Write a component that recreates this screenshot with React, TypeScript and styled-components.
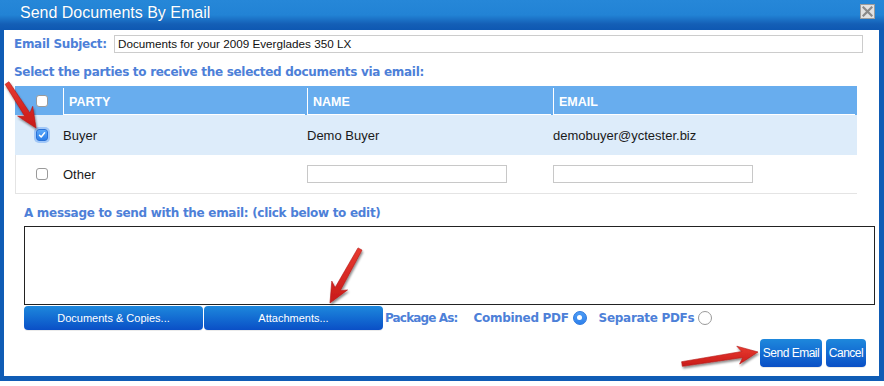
import React from "react";
import styled, { createGlobalStyle, css } from "styled-components";

const GlobalStyle = createGlobalStyle`
  html, body { margin: 0; padding: 0; background: #ffffff; }
  body { font-family: "Liberation Sans", Arial, sans-serif; }
  * { box-sizing: border-box; }
`;

const BLUE_TEXT = "#4d80d8";
const BORDER_BLUE = "#0f5cb5";

const Page = styled.div`
  position: relative;
  width: 884px;
  height: 386px;
  overflow: hidden;
`;

const Dialog = styled.div`
  width: 884px;
  height: 381px;
  display: flex;
  flex-direction: column;
  border-left: 4px solid ${BORDER_BLUE};
  border-right: 5px solid ${BORDER_BLUE};
  border-bottom: 5px solid ${BORDER_BLUE};
  background: #ffffff;
`;

const TitleBar = styled.div`
  height: 30px;
  margin: 0 -5px 0 -4px;
  padding: 4px 9px 0 20px;
  display: flex;
  align-items: flex-start;
  justify-content: space-between;
  background: linear-gradient(to bottom, #2687d8 0%, #2283d5 50%, #145fb6 80%, #0e58b2 100%);
`;

const Title = styled.div`
  color: #ffffff;
  font-size: 16px;
  line-height: 18px;
  font-family: "Liberation Sans", Arial, sans-serif;
  text-shadow: 0 0 1px rgba(0, 40, 100, 0.3);
`;

const CloseButton = styled.div`
  width: 15px;
  height: 15px;
  border: 1px solid #9c9c9c;
  background: #e2e2e2;
  display: flex;
  align-items: center;
  justify-content: center;
`;

const Body = styled.div`
  flex: 1;
  display: flex;
  flex-direction: column;
`;

const FieldRow = styled.div`
  margin-top: 5px;
  padding-left: 10px;
  height: 18px;
  display: flex;
  align-items: center;
`;

const boldBlue = css`
  font-family: "DejaVu Sans", Verdana, sans-serif;
  font-weight: bold;
  color: ${BLUE_TEXT};
  font-size: 12px;
  letter-spacing: -0.3px;
`;

const Label = styled.span`
  ${boldBlue};
  width: 100px;
  line-height: 14px;
`;

const SubjectInput = styled.div`
  width: 749px;
  height: 18px;
  border: 1px solid #cccccc;
  padding: 0 0 0 3px;
  font-family: "Liberation Sans", Arial, sans-serif;
  font-size: 11.7px;
  line-height: 16px;
  color: #111;
`;

const SectionLabel = styled.div<{ $indent: number; $top: number }>`
  ${boldBlue};
  margin-top: ${(p) => p.$top}px;
  padding-left: ${(p) => p.$indent}px;
  height: 14px;
  line-height: 14px;
`;

const Table = styled.div`
  margin-top: 7px;
  margin-left: 11px;
  width: 842px;
  display: flex;
  flex-direction: column;
`;

const columns = "48px 244px 246px 304px";

const HeaderRow = styled.div`
  display: grid;
  grid-template-columns: ${columns};
  height: 29px;
  background: #68adee;
`;

const HeaderCheckCell = styled.div`
  display: flex;
  align-items: center;
  padding-left: 21px;
`;

const HeaderCell = styled.div`
  position: relative;
  margin-top: 2px;
  border-left: 1px solid #ffffff;
  padding-left: 5px;
  display: flex;
  align-items: center;
  color: #ffffff;
  font-weight: bold;
  font-size: 12.5px;
  font-family: "Liberation Sans", Arial, sans-serif;
  &::after {
    content: "";
    position: absolute;
    left: 0;
    right: 2px;
    bottom: 0;
    height: 1px;
    background: #ffffff;
  }
`;

const Row = styled.div<{ $selected?: boolean; $height: number }>`
  display: grid;
  grid-template-columns: ${columns};
  height: ${(p) => p.$height}px;
  align-items: center;
  background: ${(p) => (p.$selected ? "#ddecfa" : "#ffffff")};
  border-left: 1px solid ${(p) => (p.$selected ? "#ddecfa" : "#e4e4e4")};
  border-bottom: ${(p) => (p.$selected ? "none" : "1px solid #e4e4e4")};
`;

const CheckCell = styled.div`
  display: flex;
  align-items: center;
  padding-left: 20px;
`;

const Cell = styled.div`
  font-family: "Liberation Sans", Arial, sans-serif;
  font-size: 13px;
  color: #1a1a1a;
  margin-left: -1px;
`;

const Box = styled.span<{ $checked?: boolean }>`
  width: 12px;
  height: 12px;
  border-radius: 3px;
  display: inline-flex;
  align-items: center;
  justify-content: center;
  ${(p) =>
    p.$checked
      ? css`
          background: linear-gradient(to bottom, #5aa8fa, #2b7fea);
          border: 1px solid #2a72d8;
          box-shadow: 0 0 0 2px rgba(110, 170, 245, 0.55);
        `
      : css`
          background: #ffffff;
          border: 1px solid #9a9a9a;
        `}
`;

const Checkbox = ({ checked }: { checked?: boolean }) => (
  <Box $checked={checked}>
    {checked && (
      <svg width="8" height="8" viewBox="0 0 8 8">
        <path d="M1.5 4.2 L3.2 6 L6.6 1.8" stroke="#fff" strokeWidth="1.5" fill="none" strokeLinecap="round" strokeLinejoin="round" />
      </svg>
    )}
  </Box>
);

const TextInput = styled.div`
  width: 200px;
  height: 18px;
  border: 1px solid #c8c8c8;
  background: #fff;
`;

const MessageBox = styled.div`
  margin-top: 6px;
  margin-left: 20px;
  width: 851px;
  height: 79px;
  border: 1px solid #222222;
  background: #ffffff;
`;

const ActionRow = styled.div`
  margin-top: 1px;
  padding-left: 20px;
  height: 24px;
  display: flex;
  align-items: center;
`;

const BlueButton = styled.div<{ $width: number; $height: number; $size: number; $spacing?: number }>`
  width: ${(p) => p.$width}px;
  height: ${(p) => p.$height}px;
  border-radius: 4px;
  background: linear-gradient(to bottom, #1e88dc 0%, #136cd2 50%, #0a4fc6 100%);
  color: #ffffff;
  font-family: "Liberation Sans", Arial, sans-serif;
  font-size: ${(p) => p.$size}px;
  letter-spacing: ${(p) => p.$spacing ?? 0}px;
  display: flex;
  align-items: center;
  justify-content: center;
  box-shadow: 0 1px 0 rgba(0, 0, 0, 0.08);
`;

const ButtonGroup = styled.div`
  display: flex;
  gap: 1px;
`;

const PackageGroup = styled.div`
  display: flex;
  align-items: center;
  margin-left: 2px;
  padding-bottom: 1px;
`;

const PackageText = styled.span<{ $gapBefore?: number; $gapAfter: number; $spacing?: number }>`
  ${boldBlue};
  letter-spacing: ${(p) => p.$spacing ?? -0.3}px;
  margin-left: ${(p) => p.$gapBefore ?? 0}px;
  margin-right: ${(p) => p.$gapAfter}px;
`;

const Radio = styled.span<{ $checked?: boolean }>`
  width: 14px;
  height: 14px;
  border-radius: 50%;
  display: inline-flex;
  align-items: center;
  justify-content: center;
  ${(p) =>
    p.$checked
      ? css`
          background: linear-gradient(to bottom, #4d9cf5, #2f82ec);
          border: 1px solid #2d78de;
          &::after {
            content: "";
            width: 5px;
            height: 5px;
            border-radius: 50%;
            background: #ffffff;
          }
        `
      : css`
          background: #ffffff;
          border: 1px solid #9a9a9a;
        `}
`;

const FooterRow = styled.div`
  margin-top: 9px;
  padding-right: 13px;
  display: flex;
  justify-content: flex-end;
  gap: 4px;
`;

const ArrowLayer = styled.svg`
  position: absolute;
  left: 0;
  top: 0;
  pointer-events: none;
`;

type Pt = [number, number];

function arrowPoints(tail: Pt, tip: Pt, shaft: number, headW: number, headL: number, sweep: number) {
  const dx = tip[0] - tail[0];
  const dy = tip[1] - tail[1];
  const len = Math.hypot(dx, dy);
  const ux = dx / len;
  const uy = dy / len;
  const nx = -uy;
  const ny = ux;
  const bx = tip[0] - ux * headL;
  const by = tip[1] - uy * headL;
  const wx = bx - ux * sweep;
  const wy = by - uy * sweep;
  const pts: Pt[] = [
    [tail[0] + (nx * shaft) / 2.6, tail[1] + (ny * shaft) / 2.6],
    [bx + (nx * shaft) / 2, by + (ny * shaft) / 2],
    [wx + (nx * headW) / 2, wy + (ny * headW) / 2],
    tip,
    [wx - (nx * headW) / 2, wy - (ny * headW) / 2],
    [bx - (nx * shaft) / 2, by - (ny * shaft) / 2],
    [tail[0] - (nx * shaft) / 2.6, tail[1] - (ny * shaft) / 2.6],
  ];
  return pts.map((p) => `${p[0].toFixed(1)},${p[1].toFixed(1)}`).join(" ");
}

const arrows: { tail: Pt; tip: Pt }[] = [
  { tail: [7, 83], tip: [36, 128] },
  { tail: [360, 249], tip: [330, 303] },
  { tail: [682, 364], tip: [758, 352] },
];

const Arrows = () => (
  <ArrowLayer width="884" height="386" viewBox="0 0 884 386">
    <defs>
      <filter id="shadow" x="-20%" y="-20%" width="140%" height="140%">
        <feDropShadow dx="1" dy="2" stdDeviation="1.2" floodColor="#000" floodOpacity="0.45" />
      </filter>
      <linearGradient id="red" x1="0" y1="0" x2="0" y2="1">
        <stop offset="0" stopColor="#e83a30" />
        <stop offset="1" stopColor="#c81a18" />
      </linearGradient>
    </defs>
    {arrows.map((a, i) => (
      <polygon
        key={i}
        points={arrowPoints(a.tail, a.tip, 6, 18, 16, 4)}
        fill="url(#red)"
        stroke="#b31614"
        strokeWidth="0.6"
        strokeLinejoin="round"
        filter="url(#shadow)"
      />
    ))}
  </ArrowLayer>
);

export default function App() {
  return (
    <>
      <GlobalStyle />
      <Page>
        <Dialog>
          <TitleBar>
            <Title>Send Documents By Email</Title>
            <CloseButton>
              <svg width="11" height="11" viewBox="0 0 11 11">
                <path d="M1.5 1.5 L9.5 9.5 M9.5 1.5 L1.5 9.5" stroke="#8a8a8a" strokeWidth="2.2" strokeLinecap="square" />
              </svg>
            </CloseButton>
          </TitleBar>
          <Body>
            <FieldRow>
              <Label>Email Subject:</Label>
              <SubjectInput>Documents for your 2009 Everglades 350 LX</SubjectInput>
            </FieldRow>
            <SectionLabel $indent={10} $top={12}>
              Select the parties to receive the selected documents via email:
            </SectionLabel>
            <Table>
              <HeaderRow>
                <HeaderCheckCell>
                  <Checkbox />
                </HeaderCheckCell>
                <HeaderCell>PARTY</HeaderCell>
                <HeaderCell>NAME</HeaderCell>
                <HeaderCell>EMAIL</HeaderCell>
              </HeaderRow>
              <Row $selected $height={40}>
                <CheckCell>
                  <Checkbox checked />
                </CheckCell>
                <Cell>Buyer</Cell>
                <Cell>Demo Buyer</Cell>
                <Cell>demobuyer@yctester.biz</Cell>
              </Row>
              <Row $height={39}>
                <CheckCell>
                  <Checkbox />
                </CheckCell>
                <Cell>Other</Cell>
                <Cell>
                  <TextInput />
                </Cell>
                <Cell>
                  <TextInput />
                </Cell>
              </Row>
            </Table>
            <SectionLabel $indent={20} $top={12}>
              A message to send with the email: (click below to edit)
            </SectionLabel>
            <MessageBox />
            <ActionRow>
              <ButtonGroup>
                <BlueButton $width={179} $height={24} $size={11}>Documents &amp; Copies...</BlueButton>
                <BlueButton $width={179} $height={24} $size={11}>Attachments...</BlueButton>
              </ButtonGroup>
              <PackageGroup>
                <PackageText $gapAfter={16} $spacing={-0.85}>Package As:</PackageText>
                <PackageText $gapAfter={4}>Combined PDF</PackageText>
                <Radio $checked />
                <PackageText $gapBefore={12} $gapAfter={4}>Separate PDFs</PackageText>
                <Radio />
              </PackageGroup>
            </ActionRow>
            <FooterRow>
              <BlueButton $width={62} $height={28} $size={12} $spacing={-0.5}>Send Email</BlueButton>
              <BlueButton $width={40} $height={28} $size={12} $spacing={-0.5}>Cancel</BlueButton>
            </FooterRow>
          </Body>
        </Dialog>
        <Arrows />
      </Page>
    </>
  );
}
